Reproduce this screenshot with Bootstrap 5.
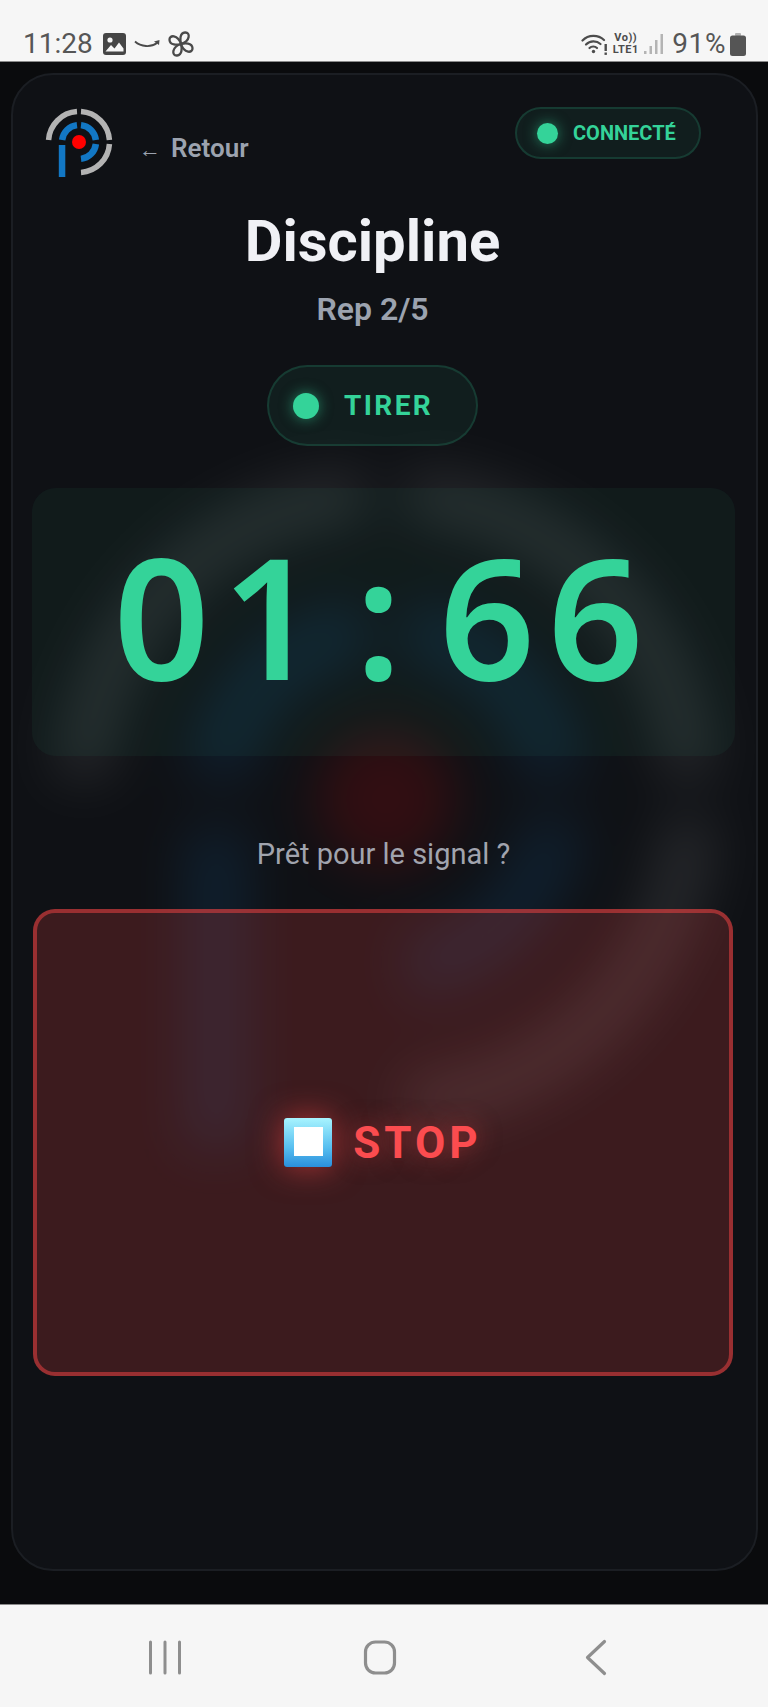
<!DOCTYPE html>
<html lang="fr">
<head>
<meta charset="utf-8">
<title>Discipline</title>
<link href="https://cdn.jsdelivr.net/npm/bootstrap@5.3.0/dist/css/bootstrap.min.css" rel="stylesheet">
<style>
html,body{height:100%;margin:0}
body{font-family:Roboto,"Liberation Sans",sans-serif;background:#0a0b0d;overflow:hidden}
.shell{height:1707px}
.sysbar{height:62px;background:#f6f6f6;border-bottom:1px solid #8a8a8a;color:#565656;padding:26px 22px 0 23px;font-size:28px;line-height:36px;flex:none}
.sysbar svg{display:block;flex:none}
.sys-pct{letter-spacing:.6px;margin-left:9px}
.ico-a{margin-left:10px}
.ico-b{margin-left:8px}
.ico-c{margin-left:7px}
.volte{font-size:11px;line-height:12px;font-weight:700;letter-spacing:.5px;text-align:center;width:29px;color:#4c4c4c;margin:0 4px 0 3px}
.batt{margin-left:4px}
.stage{flex:1 1 auto;min-height:0;padding:11px 10px 33px 11px}
.panel{height:100%;border:2px solid #1b1e23;border-radius:42px;background:#0f1115;overflow:hidden;padding:33px 21px 0 19px;isolation:isolate}
.ghost{position:absolute;left:33px;top:384px;width:680px;height:700px;filter:blur(26px);opacity:.14;z-index:-1}
.topline{height:70px;padding:0 34px 0 13px}
.logo{width:68px;height:70px;flex:none;display:block}
.back{color:#9ca3af;font-size:26px;font-weight:600;line-height:30px;margin:25px 0 0 26px}
.back i{font-style:normal;font-size:22px;font-weight:400;margin-right:10px}
.linkpill{height:52px;width:186px;border-radius:26px;border:2px solid rgba(52,211,153,.16);background:rgba(52,211,153,.07);color:#34d399;font-size:20px;font-weight:700;line-height:1;padding-left:20px;gap:15px;margin-top:-1px}
.gdot{border-radius:50%;background:#34d399;box-shadow:0 0 14px rgba(52,211,153,.55);flex:none}
.gdot-s{width:21px;height:21px}
.gdot-m{width:26px;height:26px}
.offcentre{padding-right:22px}
.headline{font-size:58px;font-weight:700;line-height:66px;color:#f0f1f5;margin:30px 0 0;text-align:center}
.rep{font-size:32px;font-weight:600;line-height:36px;color:#9ca3af;margin:17px 0 0;text-align:center}
.cuepill{height:81px;width:211px;border-radius:41px;border:2px solid rgba(52,211,153,.16);background:rgba(52,211,153,.07);color:#34d399;font-size:28px;font-weight:700;letter-spacing:2.400px;padding-left:24px;gap:25px;margin:38px 0 0 0}
.clockbox{height:268px;border-radius:24px;background:rgba(52,211,153,.05);margin:42px 0 0 0;padding:0 10px 14px 0;font-family:"Noto Sans",sans-serif;font-size:168px;font-weight:600;line-height:1;color:#34d399}
.cell{width:108.500px;text-align:center;display:block}
.hint{font-size:29px;line-height:34px;color:#a1a4ae;text-align:center;margin:81px 0 0}
.stopbtn{height:467px;width:700px;border-radius:22px;border:4px solid rgba(239,68,68,.52);background:rgba(239,68,68,.2);color:#fb4c4f;font-size:44px;font-weight:700;letter-spacing:4px;line-height:1;margin:38px 0 0 1px;padding:0;gap:21px;text-shadow:0 0 24px rgba(239,68,68,.5);box-shadow:none}
.stopbtn:hover,.stopbtn:active{color:#fb4c4f;border-color:rgba(239,68,68,.52);background:rgba(239,68,68,.2)}
.stopface{width:48px;height:49px;border-radius:3px;background:linear-gradient(180deg,#a8f4ff 0%,#58bff0 60%,#2a8fdc 100%);box-shadow:0 0 32px rgba(239,68,68,.65);flex:none}
.stopcore{width:29px;height:29px;background:#fff;margin-top:-3px}
.navbar-sys{height:103px;background:#f6f6f6;border-top:1px solid #8a8a8a;flex:none;gap:155px;padding:0 8px 0 0}
.navbar-sys svg{display:block;width:60px;height:40px;margin-top:1px}
</style>
</head>
<body>
<svg width="0" height="0" class="position-absolute">
  <defs>
    <symbol id="mark" viewBox="-34 -34 68 70">
      <g fill="none" stroke="#b3b3b3" stroke-width="5.500">
        <path d="M-30.43 -2A30.5 30.5 0 0 1 -2 -30.43"/>
        <path d="M2 -30.43A30.5 30.5 0 0 1 30.43 -2"/>
        <path d="M30.43 2A30.5 30.5 0 0 1 2 30.43"/>
      </g>
      <g fill="none" stroke="#1277c4" stroke-width="6.500">
        <path d="M-16.88 -2A17 17 0 0 1 -2 -16.88"/>
        <path d="M2 -16.88A17 17 0 0 1 16.88 -2"/>
        <path d="M16.88 2A17 17 0 0 1 2 16.88"/>
      </g>
      <rect x="-20.200" y="3" width="6.500" height="32" fill="#1277c4"/>
      <circle r="7" fill="#f00"/>
    </symbol>
  </defs>
</svg>
<div class="shell d-flex flex-column">
  <div class="sysbar d-flex justify-content-between align-items-start">
    <div class="d-flex align-items-center">
      <span>11:28</span>
      <svg class="ico-a" width="23" height="22" viewBox="0 0 23 22"><rect width="23" height="22" rx="3" fill="#454545"/><circle cx="7" cy="7" r="2.600" fill="#f6f6f6"/><path d="M2.500 18.500 8 12l3.500 3.500L16 9.500l4.500 6v3z" fill="#f6f6f6"/></svg>
      <svg class="ico-b" width="27" height="10" viewBox="0 0 27 10"><path d="M1 2.500C7 8 17 8.500 23 4" fill="none" stroke="#4a4a4a" stroke-width="1.800"/><path d="M20 2.500 25.500 1 25 6z" fill="#4a4a4a"/></svg>
      <svg class="ico-c" width="26" height="26" viewBox="-13 -13 26 26"><g fill="none" stroke="#4a4a4a" stroke-width="2.300" stroke-linejoin="round"><path d="M0 0C-1-4-1.500-11 4-11.500 9.500-12 9.500-3 0 0Z"/><path d="M0 0C-1-4-1.500-11 4-11.500 9.500-12 9.500-3 0 0Z" transform="rotate(90)"/><path d="M0 0C-1-4-1.500-11 4-11.500 9.500-12 9.500-3 0 0Z" transform="rotate(180)"/><path d="M0 0C-1-4-1.500-11 4-11.500 9.500-12 9.500-3 0 0Z" transform="rotate(270)"/></g></svg>
    </div>
    <div class="d-flex align-items-center">
      <svg width="27" height="22" viewBox="0 0 27 22"><g fill="none" stroke="#4c4c4c" stroke-width="2.200" stroke-linecap="round"><path d="M1.500 7.500C7.500 1.500 17 1.500 23 7"/><path d="M5 11.500C9 7.500 15.500 7.500 19.500 11"/><path d="M8.500 15C10.500 13 14 13 16 15"/></g><circle cx="12.500" cy="18.500" r="1.700" fill="#4c4c4c"/><rect x="23.500" y="11" width="2.400" height="7" fill="#4c4c4c"/><rect x="23.500" y="19.500" width="2.400" height="2.400" fill="#4c4c4c"/></svg>
      <div class="volte">Vo))<br>LTE1</div>
      <svg width="19" height="22" viewBox="0 0 19 22"><g fill="#b4b4b4"><rect x="0" y="18" width="2.500" height="3"/><rect x="5.500" y="13" width="2.500" height="8"/><rect x="11" y="7" width="2.500" height="14"/><rect x="16.500" y="1" width="2.500" height="20"/></g></svg>
      <span class="sys-pct">91%</span>
      <svg class="batt" width="16" height="23" viewBox="0 0 16 23"><rect x="5" y="0" width="6" height="3" rx="1" fill="#b0b0b0"/><rect x="0" y="2.500" width="16" height="20.500" rx="2.500" fill="#555"/></svg>
    </div>
  </div>

  <main class="stage">
    <div class="panel position-relative d-flex flex-column">
      <svg class="ghost" aria-hidden="true"><use href="#mark"/></svg>
      <div class="topline d-flex justify-content-between align-items-start">
        <div class="d-flex align-items-start">
          <svg class="logo" role="img" aria-label="Logo"><use href="#mark"/></svg>
          <div class="back"><i>←</i>Retour</div>
        </div>
        <div class="linkpill d-flex align-items-center"><span class="gdot gdot-s"></span><span>CONNECTÉ</span></div>
      </div>
      <h1 class="headline offcentre">Discipline</h1>
      <p class="rep offcentre">Rep 2/5</p>
      <div class="d-flex justify-content-center offcentre">
        <div class="cuepill d-flex align-items-center"><span class="gdot gdot-m"></span><span>TIRER</span></div>
      </div>
      <div class="clockbox d-flex justify-content-center align-items-center">
        <span class="cell">0</span><span class="cell">1</span><span class="cell">:</span><span class="cell">6</span><span class="cell">6</span>
      </div>
      <p class="hint">Prêt pour le signal ?</p>
      <button type="button" class="btn stopbtn d-flex justify-content-center align-items-center">
        <span class="stopface d-flex justify-content-center align-items-center"><span class="stopcore"></span></span>
        <span>STOP</span>
      </button>
    </div>
  </main>

  <nav class="navbar-sys d-flex justify-content-center align-items-center">
    <svg viewBox="0 0 60 40"><g stroke="#8e8e8e" stroke-width="3" stroke-linecap="round"><path d="M15.500 5V36M30 5V36M44.500 5V36"/></g></svg>
    <svg viewBox="0 0 60 40"><rect x="15.500" y="5" width="29" height="31" rx="10" fill="none" stroke="#8e8e8e" stroke-width="3.200"/></svg>
    <svg viewBox="0 0 60 40"><path d="M39.500 4.500 22.500 20.500 39.500 36.500" fill="none" stroke="#8e8e8e" stroke-width="3.200" stroke-linecap="round" stroke-linejoin="round"/></svg>
  </nav>
</div>
<script src="https://cdn.jsdelivr.net/npm/bootstrap@5.3.0/dist/js/bootstrap.bundle.min.js"></script>
</body>
</html>
